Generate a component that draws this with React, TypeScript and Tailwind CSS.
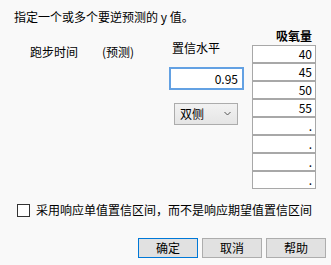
import React from 'react'

const values = ['40', '45', '50', '55', '.', '.', '.', '.']

export default function App() {
  return (
    <div
      className="w-[331px] h-[265px] bg-[#f9f9f9] text-[12px] leading-[16px] text-black overflow-hidden"
      style={{ fontFamily: '"Noto Sans CJK SC", "Noto Sans", sans-serif' }}
    >
      <p className="pl-[14px] pt-[9px]">指定一个或多个要逆预测的 y 值。</p>

      <div className="flex">
        {/* factor column */}
        <div className="w-[169px] pl-[30px] pt-[19px] flex">
          <span>跑步时间</span>
          <span className="ml-[24px]">(预测)</span>
        </div>

        {/* confidence */}
        <div className="w-[83px] pt-[15px] flex flex-col items-start">
          <span className="ml-[3px]">置信水平</span>
          <div className="mt-[11px] w-[75px] h-[23px] border-2 border-[#63a1e3] bg-white flex items-center justify-end pr-[4px]">
            0.95
          </div>
          <div className="mt-[13px] ml-[5px] w-[64px] h-[22px] border border-[#acacac] bg-gradient-to-b from-[#f2f2f2] to-[#e5e5e5] flex items-center justify-between pl-[5px] pr-[6px]">
            <span>双侧</span>
            <svg width="7" height="5" viewBox="0 0 7 5" className="mb-[2px]">
              <path d="M0.5 1 L3.5 4 L6.5 1" fill="none" stroke="#555" strokeWidth="1" />
            </svg>
          </div>
        </div>

        {/* response column */}
        <div className="w-[64px] pt-[3px] flex flex-col">
          <span className="font-bold text-right pr-[4px] mb-[1px]">吸氧量</span>
          {values.map((v, i) => (
            <div
              key={i}
              className="h-[18px] border border-[#a8a8a8] bg-white flex items-center justify-end pr-[3px]"
            >
              {v}
            </div>
          ))}
        </div>
      </div>

      <label className="mt-[13px] flex items-center h-[16px] pl-[17px]">
        <span className="w-[13px] h-[13px] border border-[#333] bg-white" />
        <span className="ml-[6px]">采用响应单值置信区间，而不是响应期望值置信区间</span>
      </label>

      <div className="mt-[20px] flex justify-end gap-[4px] pr-[5px]">
        <button className="w-[60px] h-[20px] bg-[#e1e1e1] border border-[#0078d7] flex items-center justify-center">
          确定
        </button>
        <button className="w-[60px] h-[20px] bg-[#e1e1e1] border border-[#adadad] flex items-center justify-center">
          取消
        </button>
        <button className="w-[60px] h-[20px] bg-[#e1e1e1] border border-[#adadad] flex items-center justify-center">
          帮助
        </button>
      </div>
    </div>
  )
}
